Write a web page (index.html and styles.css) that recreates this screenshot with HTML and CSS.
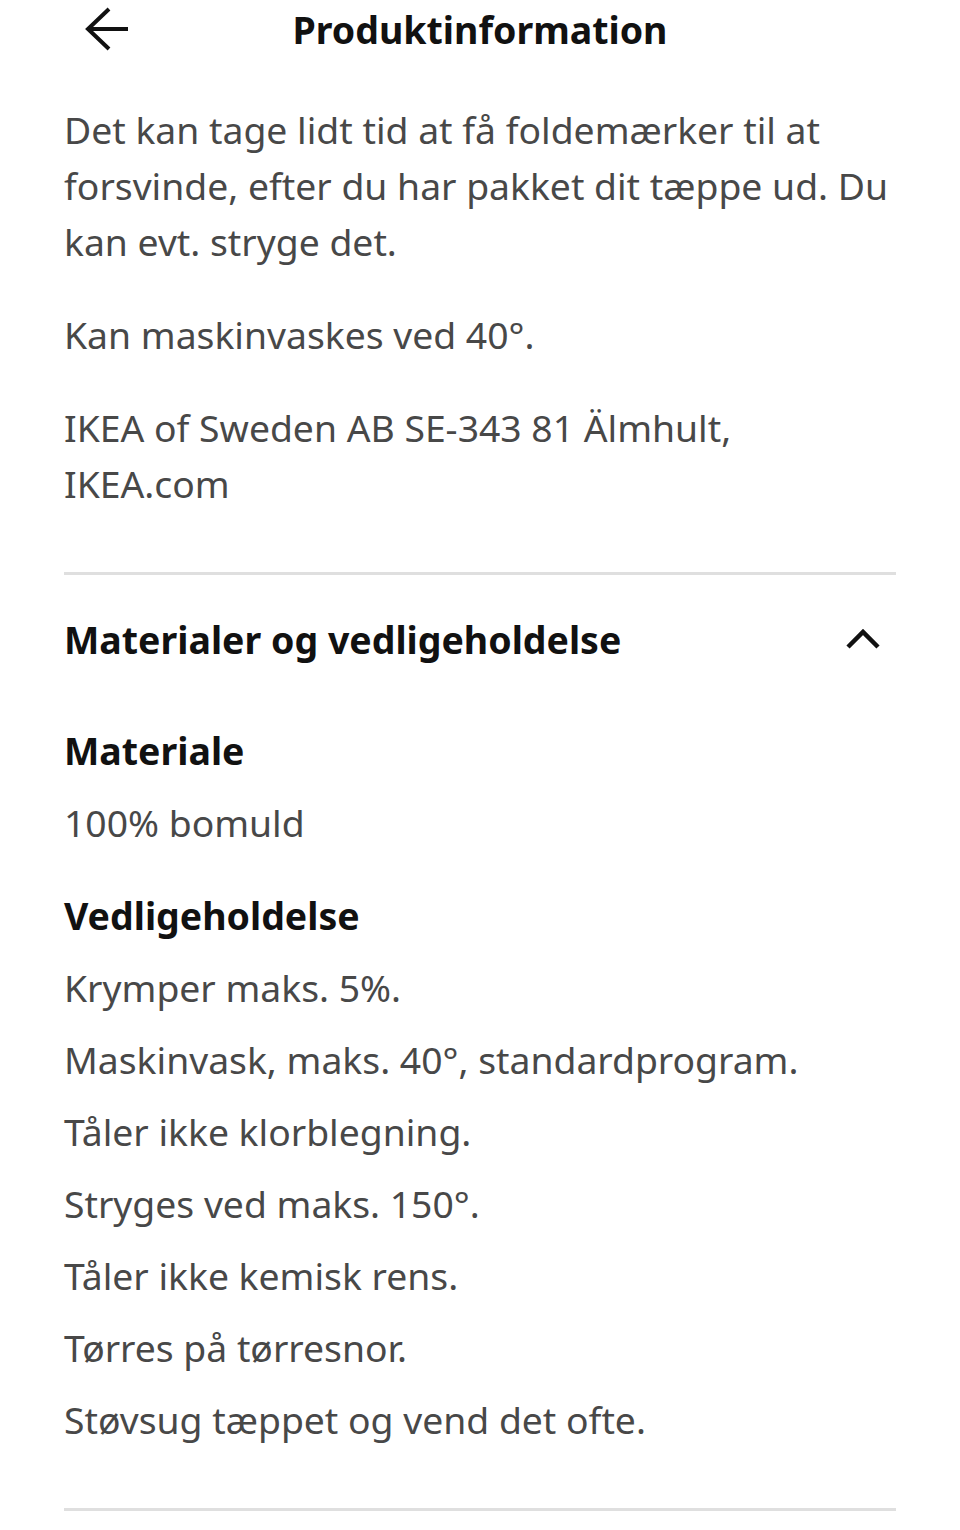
FILE: index.html
```html
<!DOCTYPE html>
<html lang="da">
<head>
<meta charset="utf-8">
<title>Produktinformation</title>
<link rel="stylesheet" href="styles.css">
</head>
<body>
<header class="topbar">
  <button class="back" aria-label="Tilbage">
    <svg width="46" height="44" viewBox="0 0 46 44"><path d="M44 22H4M25 2L4 22l21 20" fill="none" stroke="#111" stroke-width="4"/></svg>
  </button>
  <h1 class="title">Produktinformation</h1>
</header>
<main class="content">
  <section class="intro">
    <p>Det kan tage lidt tid at få foldemærker til at forsvinde, efter du har pakket dit tæppe ud. Du kan evt. stryge det.</p>
    <p>Kan maskinvaskes ved 40°.</p>
    <p>IKEA of Sweden AB SE-343 81 Älmhult, IKEA.com</p>
  </section>
  <hr class="divider">
  <section class="accordion">
    <div class="acc-head">
      <h2>Materialer og vedligeholdelse</h2>
      <svg class="chev" width="36" height="22" viewBox="0 0 36 22"><path d="M3 19L18 4l15 15" fill="none" stroke="#111" stroke-width="4.5"/></svg>
    </div>
    <h3 class="mat">Materiale</h3>
    <p class="value">100% bomuld</p>
    <h3 class="care">Vedligeholdelse</h3>
    <ul class="care-list">
      <li>Krymper maks. 5%.</li>
      <li>Maskinvask, maks. 40°, standardprogram.</li>
      <li>Tåler ikke klorblegning.</li>
      <li>Stryges ved maks. 150°.</li>
      <li>Tåler ikke kemisk rens.</li>
      <li>Tørres på tørresnor.</li>
      <li>Støvsug tæppet og vend det ofte.</li>
    </ul>
  </section>
  <hr class="divider bottom">
</main>
</body>
</html>
```

FILE: styles.css
```css
* { box-sizing: border-box; }
html, body { margin: 0; padding: 0; background: #fff; }
body {
  font-family: "Noto Sans", "DejaVu Sans", sans-serif;
  color: #484848;
  width: 960px;
}
.topbar {
  height: 58px;
  display: flex;
  align-items: center;
  justify-content: center;
  position: relative;
}
.back {
  position: absolute;
  left: 84px;
  top: 7px;
  background: none;
  border: 0;
  padding: 0;
  width: 46px;
  height: 44px;
}
.back svg { display: block; }
.title {
  margin: 0;
  font-size: 37.5px;
  font-weight: 700;
  color: #111;
}
.content { padding: 0 64px; }
.intro { padding-top: 44px; }
.intro p {
  margin: 0 0 37px;
  font-size: 37.3px;
  line-height: 56px;
}
.intro p:last-child { margin-bottom: 0; }
.divider {
  border: 0;
  height: 3px;
  background: #dfdfdf;
  margin: 60px 0 0;
}
.acc-head {
  display: flex;
  justify-content: space-between;
  align-items: center;
  height: 128px;
}
.acc-head h2 {
  margin: 0;
  font-size: 37.5px;
  font-weight: 700;
  color: #111;
}
.chev { margin-right: 15px; display: block; }
h3 {
  margin: 0;
  font-size: 37.5px;
  font-weight: 700;
  color: #111;
  line-height: 56px;
}
.mat { margin-top: 20px; }
.value {
  margin: 16px 0 0;
  font-size: 37.3px;
  line-height: 56px;
}
.care { margin-top: 37px; }
.care-list {
  list-style: none;
  margin: 8px 0 0;
  padding: 0;
}
.care-list li {
  font-size: 37.3px;
  line-height: 72px;
}
.divider.bottom { margin-top: 52px; }
```
